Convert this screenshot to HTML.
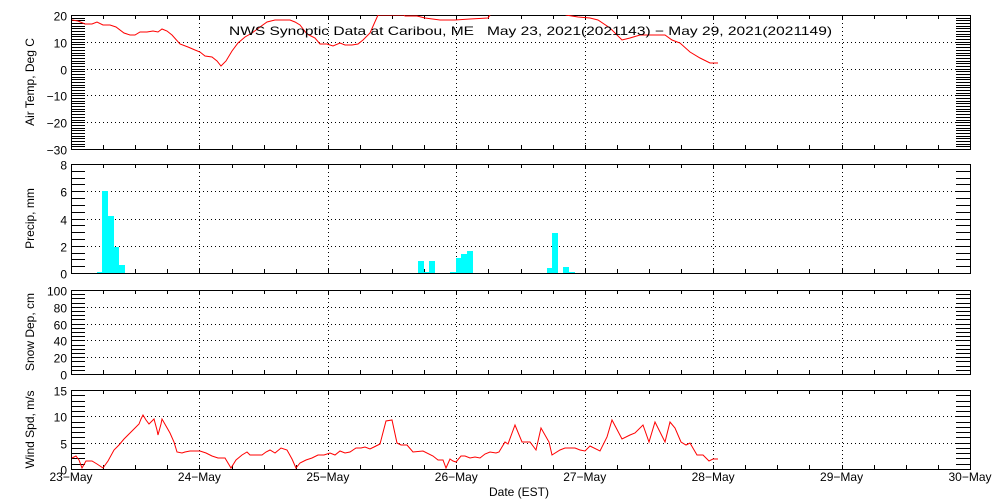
<!DOCTYPE html>
<html><head><meta charset="utf-8">
<style>
html,body{margin:0;padding:0;background:#fff;width:1000px;height:500px;overflow:hidden}
svg text{font-family:"Liberation Sans",sans-serif;font-size:12px;fill:#000}
</style></head><body>
<svg id="s" width="1000" height="500" viewBox="0 0 1000 500" xmlns="http://www.w3.org/2000/svg"></svg>
<script>
var S=document.getElementById('s'),h='';
var X0=71,X1=970,DAY=(X1-X0)/7;
function L(x1,y1,x2,y2,ex){h+='<line x1="'+x1+'" y1="'+y1+'" x2="'+x2+'" y2="'+y2+'" stroke="#000" stroke-width="1" '+(ex||'')+'/>';}
function T(x,y,t,ex){h+='<text x="'+x+'" y="'+y+'" '+(ex||'')+'>'+t+'</text>';}
var dot='stroke-dasharray="1,3"';
function panel(top,bot,vmin,vmax,major,minor,label,labs){
  var sc=(bot-top)/(vmax-vmin);
  function Y(v){return bot-(v-vmin)*sc;}
  for(var v=vmin;v<=vmax+1e-6;v+=minor){var y=Math.round(Y(v))+0.5;L(X0,y,X0+14,y);L(X1-14,y,X1,y);}
  for(var v=vmin;v<=vmax+1e-6;v+=major){var y=Math.round(Y(v))+0.5;
    if(v>vmin&&v<vmax)L(X0,y,X1,y,dot);
    T(67,y+5,(''+v).replace('-','−'),'text-anchor="end" font-size="12.5"');}
  for(var d=1;d<7;d++){var x=Math.round(X0+d*DAY)+0.5;L(x,top,x,bot,dot);}
  for(var i=1;i<28;i++){var x=Math.round(X0+i*DAY/4)+0.5;L(x,top,x,top+4);L(x,bot-4,x,bot);}
  h+='<rect x="'+(X0+0.5)+'" y="'+(top+0.5)+'" width="'+(X1-X0)+'" height="'+(bot-top)+'" fill="none" stroke="#000"/>';
  var cy=(top+bot)/2;
  T(34,cy,label,'text-anchor="middle" transform="rotate(-90 34 '+cy+')" font-size="13.5"');
  return Y;
}
function poly(pts,clip){var s='';for(var i=0;i<pts.length;i+=2)s+=pts[i]+','+pts[i+1]+' ';
  h+='<polyline points="'+s+'" fill="none" stroke="#f00" stroke-width="1" '+(clip||'')+'/>';}
h+='<defs><clipPath id="c1"><rect x="71" y="15" width="899" height="134"/></clipPath></defs>';
panel(15,149,-30,20,10,1,'Air Temp, Deg C');
poly([72,20,78,21,85,24,92,24,97,22,103,25,110,25,116,27,124,33,130,35,135,35,140,32,147,32,153,31,158,32,162,29,167,31,172,35,180,44,188,47,195,50,200,52,205,56,212,57,217,61,221,66,226,61,232,51,238,43,245,37,252,33,260,27,267,22,275,20,290,20,295,22,300,25,307,34,315,38,320,44,327,44,333,46,340,43,345,45,352,45,358,44,363,40,370,33,378,15,395,15,404,15,405,16,417,16,425,18,440,20,455,20,470,19,488,18,490,15,492,10,564,10,566,15,578,17,590,18,598,20,610,28,622,40,630,38,640,35,665,35,672,40,680,43,690,52,700,58,710,63,718,63],'clip-path="url(#c1)"');
T(229,35,'NWS Synoptic Data at Caribou, ME &#160;&#160;May 23, 2021(2021143) − May 29, 2021(2021149)','font-size="13.5" textLength="603" lengthAdjust="spacingAndGlyphs"');
panel(164,273,0,8,2,0.5,'Precip, mm');
var bars=[[97,102,272],[102,108,191],[108,114,216],[114,119,247],[119,125,265],[418,424,261],[424,429,272],[429,435,261],[450,456,272],[456,461,258],[461,467,254],[467,473,251],[547,552,268],[552,558,233],[563,569,267],[569,575,272]];
bars.forEach(function(b){h+='<rect x="'+b[0]+'" y="'+b[2]+'" width="'+(b[1]-b[0])+'" height="'+(273-b[2])+'" fill="#0ff"/>';});
L(X0,273.5,X1,273.5);
panel(290,374,0,100,20,5,'Snow Dep, cm');
panel(390,469,0,15,5,1,'Wind Spd, m/s');
poly([72,458,76,456,79,460,82,468,86,461,92,461,97,464,103,468,108,461,114,450,119,445,124,439,130,433,135,428,139,424,141,419,143,415,146,420,149,424,152,421,154,419,157,430,158,435,161,424,162,419,166,426,170,433,174,442,177,452,182,453,185,452,190,451,200,451,206,453,212,456,218,458,225,458,231,468,236,460,242,455,247,452,250,455,256,455,262,455,266,452,270,450,275,453,281,448,287,450,292,459,296,468,300,463,306,460,312,458,318,455,324,455,330,453,335,455,340,451,345,453,350,452,356,448,361,448,365,447,370,449,374,447,380,444,386,421,392,420,397,443,401,445,407,445,413,452,423,451,433,456,438,460,443,460,446,468,450,459,453,461,456,462,461,456,465,456,470,458,475,457,480,458,485,454,490,452,496,453,499,452,505,442,508,444,515,425,522,442,530,442,536,450,541,428,549,442,552,455,560,450,565,448,575,448,580,450,585,451,590,446,600,451,607,437,612,420,622,439,630,435,635,433,643,425,649,442,655,422,665,442,670,422,675,428,681,442,686,445,690,443,697,455,703,455,709,461,713,459,718,459]);
for(var d=0;d<=7;d++){var x=X0+d*DAY;T(x,481,(23+d)+'−May','text-anchor="middle" font-size="13"');}
T(519,496,'Date (EST)','text-anchor="middle" font-size="13"');
S.innerHTML=h;
</script>
</body></html>
